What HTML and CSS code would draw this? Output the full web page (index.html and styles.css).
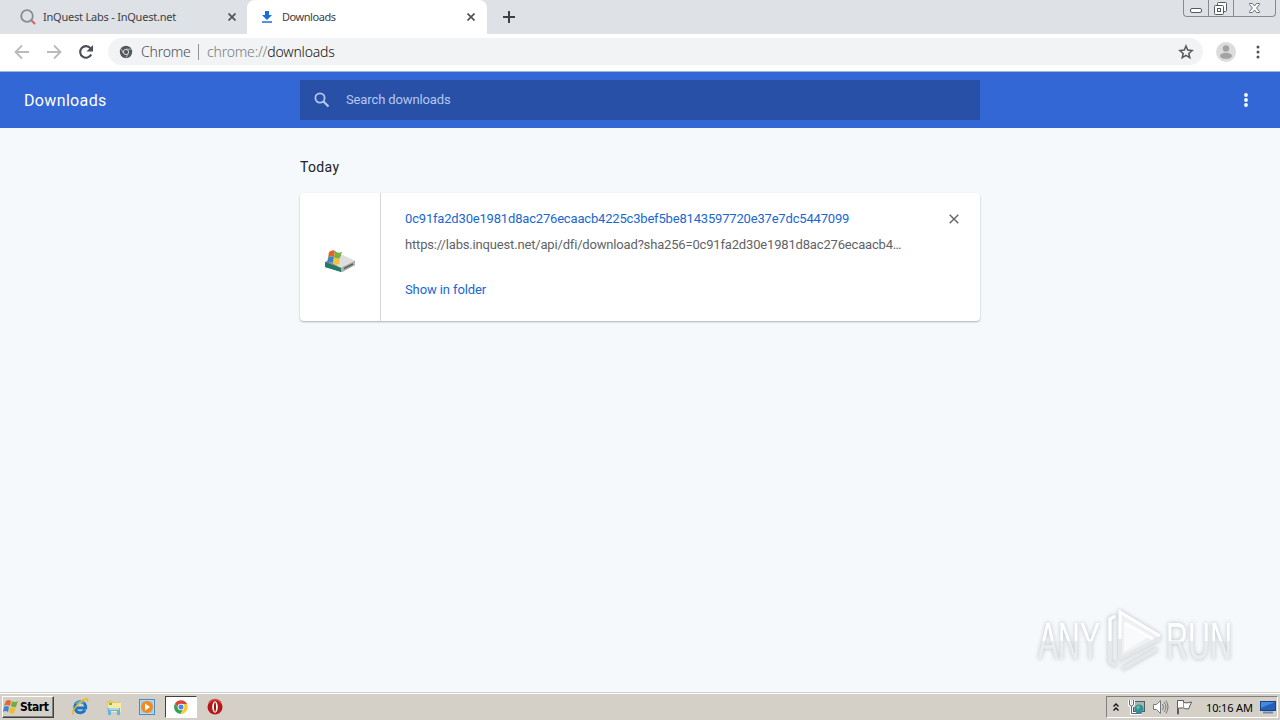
FILE: index.html
```html
<!DOCTYPE html>
<html lang="en">
<head>
    <meta charset="UTF-8">
    <meta name="viewport" content="width=device-width, initial-scale=1.0">
    <title>Downloads</title>
    <link rel="stylesheet" href="styles.css">
</head>
<body>
    <div class="tab-strip">
        <div class="tab">
            <svg class="tab-icon" width="16" height="16" viewBox="0 0 16 16" fill="none">
                <circle cx="7" cy="7" r="5.8" stroke="#888b90" stroke-width="1.8"/>
                <path d="M11 11l1.5 1.5" stroke="#888b90" stroke-width="2"/>
                <path d="M12.3 12.3l2.7 2.7" stroke="#e0605a" stroke-width="2.2"/>
            </svg>
            <span class="tab-title tab-title-long">InQuest Labs - InQuest.net</span>
            <svg class="tab-close" width="8" height="8" viewBox="0 0 8 8"><path d="M.5.5l7 7M7.5.5l-7 7" stroke="#505359" stroke-width="1.7"/></svg>
        </div>
        <div class="tab active">
            <svg class="tab-icon" width="16" height="16" viewBox="0 0 16 16" fill="#1a6fd6">
                <path d="M6 2h4v4h3L8 11 3 6h3zM3 12.3h10v1.5H3z"/>
            </svg>
            <span class="tab-title">Downloads</span>
            <svg class="tab-close" width="8" height="8" viewBox="0 0 8 8"><path d="M.5.5l7 7M7.5.5l-7 7" stroke="#505359" stroke-width="1.7"/></svg>
        </div>
        <svg class="new-tab" width="12" height="12" viewBox="0 0 12 12"><path d="M6 0v12M0 6h12" stroke="#3c4043" stroke-width="2"/></svg>
        <div class="window-buttons">
            <div class="win-btn minimize">
                <svg width="24" height="16" viewBox="0 0 24 16"><rect x="6.5" y="8.5" width="11" height="4" rx="1.5" fill="#fff" stroke="#55585f"/></svg>
            </div>
            <div class="win-btn restore">
                <svg width="24" height="16" viewBox="0 0 24 16" fill="#fff" stroke="#55585f">
                    <rect x="8.5" y="2.5" width="9" height="9" rx="1"/>
                    <rect x="5.5" y="5.5" width="9" height="9" rx="1"/>
                    <rect x="8.5" y="8.5" width="3" height="3"/>
                </svg>
            </div>
            <div class="win-btn close">
                <svg width="40" height="16" viewBox="0 0 40 16"><path d="M15.5 3.5h3l2 2.5 2-2.5h3v1l-3 3.5 3 3.500v1h-3l-2-2.5-2 2.5h-3v-1l3-3.5-3-3.500z" fill="#fff" stroke="#6b6e75"/></svg>
            </div>
        </div>
    </div>

    <div class="toolbar">
        <svg class="nav-icon" width="16" height="16" viewBox="0 0 16 16" fill="none" stroke="#b8babd" stroke-width="1.8"><path d="M15 8H2M8 1.5L1.5 8 8 14.5"/></svg>
        <svg class="nav-icon" width="16" height="16" viewBox="0 0 16 16" fill="none" stroke="#b8babd" stroke-width="1.8"><path d="M1 8h13M8 1.5L14.5 8 8 14.5"/></svg>
        <svg class="nav-icon" width="16" height="16" viewBox="0 0 16 16"><path d="M13.2 10.5A5.8 5.8 0 1 1 12.5 4.3" fill="none" stroke="#4b4e52" stroke-width="2.1"/><path d="M15 1v6.5H8.5z" fill="#4b4e52"/></svg>
        <div class="address-bar">
            <svg class="site-icon" width="14" height="14" viewBox="0 0 14 14">
                <circle cx="7" cy="7" r="6.2" fill="#54575b"/>
                <path d="M7 4.2h5.5M4.6 8.4L2 4M9.4 8.4L7 12.8" stroke="#c0c3c6" stroke-width=".9"/>
                <circle cx="7" cy="7" r="2.6" fill="#54575b" stroke="#d9dbde"/>
            </svg>
            <span class="site-name">Chrome</span>
            <span class="divider"></span>
            <span class="url">chrome://<b>downloads</b></span>
            <svg class="star" width="16" height="16" viewBox="0 0 16 16"><path d="M8 2l1.7 4.1 4.4.4-3.3 2.9 1 4.3L8 11.4l-3.8 2.3 1-4.3-3.3-2.9 4.4-.4z" fill="none" stroke="#55585c" stroke-width="1.5"/></svg>
        </div>
        <svg class="profile" width="20" height="20" viewBox="0 0 20 20"><circle cx="10" cy="10" r="10" fill="#dcdcdc"/><circle cx="10" cy="6.5" r="3.2" fill="#a3a3a3"/><ellipse cx="10" cy="13.8" rx="6" ry="3" fill="#a3a3a3"/></svg>
        <svg class="menu" width="4" height="14" viewBox="0 0 4 14" fill="#505357"><circle cx="2" cy="2" r="1.5"/><circle cx="2" cy="7" r="1.5"/><circle cx="2" cy="12" r="1.5"/></svg>
    </div>

    <div class="header">
        <h1>Downloads</h1>
        <div class="search">
            <svg width="16" height="16" viewBox="0 0 16 16" fill="none" stroke="#b5c8f0"><circle cx="6" cy="6" r="4.6" stroke-width="1.8"/><path d="M9.5 9.5l5 5" stroke-width="2.2"/></svg>
            <span>Search downloads</span>
        </div>
        <svg class="header-menu" width="4" height="14" viewBox="0 0 4 14" fill="#fff"><circle cx="2" cy="2" r="1.9"/><circle cx="2" cy="7" r="1.9"/><circle cx="2" cy="12" r="1.9"/></svg>
    </div>

    <div class="content">
        <h2>Today</h2>
        <div class="card">
            <div class="card-icon">
                <svg width="32" height="24" viewBox="0 0 32 24">
                    <path d="M1 13l15-7 15 6v4l-13 7L1 18z" fill="#8c8e8d"/>
                    <path d="M3 11l16-5 12 6-14 7z" fill="#dededc"/>
                    <path d="M17 19v4l14-7v-4z" fill="#b0b0ae"/>
                    <path d="M20 19.5l9-4.5" stroke="#5e615f" stroke-width="1.5"/>
                    <path d="M1 13l16 6v4L1 18z" fill="#237a65"/>
                    <path d="M5 3q4-3 6-1l-1 6q-3-2-6 1z" fill="#e7622b"/>
                    <path d="M11 2q3 3 7 1l-2 6q-3 2-6-1z" fill="#72b43d"/>
                    <path d="M4 9q3-3 6-1l-1 6q-3-2-6 0z" fill="#3685cb"/>
                    <path d="M10 8q3 3 6 1l-1 6q-3 2-6-1z" fill="#f4c13c"/>
                </svg>
            </div>
            <div class="details">
                <div class="file-name">0c91fa2d30e1981d8ac276ecaacb4225c3bef5be8143597720e37e7dc5447099</div>
                <div class="file-url">https://labs.inquest.net/api/dfi/download?sha256=0c91fa2d30e1981d8ac276ecaacb4…</div>
                <div class="show">Show in folder</div>
            </div>
            <svg class="remove" width="10" height="10" viewBox="0 0 10 10"><path d="M.7.7l8.6 8.6M9.3.7L.7 9.3" stroke="#606367" stroke-width="1.4"/></svg>
        </div>

        <svg class="watermark" width="220" height="80" viewBox="0 0 220 80" fill="none">
            <defs>
                <linearGradient id="fade" x1="0" y1="0" x2="0" y2="1">
                    <stop offset=".5" stop-color="#fff"/>
                    <stop offset=".5" stop-color="#eaeced"/>
                </linearGradient>
            </defs>
            <text x="4" y="56" textLength="62" lengthAdjust="spacingAndGlyphs" fill="url(#fade)">ANY</text>
            <path d="M86 9l41 23-41 25z" fill="#eef0f2"/>
            <path d="M90 20v29l26-16z" fill="#f8fafb"/>
            <path d="M81 13l-5 3v43l6 4M86 19v37l40-21M88 66l35-20" stroke="#e5e7e9" stroke-width="4"/>
            <path d="M81 13l-5 3v22M86 36V9l40 24M91 20l28 16" stroke="#fff" stroke-width="3"/>
            <text x="132" y="56" textLength="66" lengthAdjust="spacingAndGlyphs" fill="url(#fade)">RUN</text>
        </svg>
    </div>

    <div class="taskbar">
        <div class="start">
            <svg width="17" height="16" viewBox="0 0 17 16">
                <path d="M3 2q3-2 5 0L7 7Q4 5 1 7z" fill="#e7642f"/>
                <path d="M9 2q3 2 6 0l-2 6q-3 1-5-1z" fill="#73ad3c"/>
                <path d="M1 8q3-2 5 0l-1 5q-3-2-5 0z" fill="#3f85c9"/>
                <path d="M7 8q3 2 6 1l-2 5q-3 2-5-1z" fill="#f1bc35"/>
            </svg>
            <span>Start</span>
        </div>
        <div class="launchers">
            <div class="launcher">
                <svg width="18" height="18" viewBox="0 0 18 18" fill="none">
                    <path d="M14 12a5.5 5.5 0 1 1 .6-4v2H5" stroke="#1976c2" stroke-width="3"/>
                    <path d="M13 5a5 5 0 0 0-8 1" stroke="#54b5e9" stroke-width="1.5"/>
                    <path d="M3 16C-1 16 4 8 11 3c4-3 7-3 5 1" stroke="#e8b82d" stroke-width="1.6"/>
                </svg>
            </div>
            <div class="launcher">
                <svg width="18" height="18" viewBox="0 0 18 18">
                    <path d="M2 3l5-1 1 2h7v10H2z" fill="#e6c75f"/>
                    <path d="M3 5h13v9H3z" fill="#f8e9a3"/>
                    <path d="M4 5h3v2H4z" fill="#79b64a"/>
                    <path d="M3 10h12v7h-3v-4H6v4H3z" fill="#67b5d9"/>
                    <path d="M4 10h10v2H4z" fill="#a5d9ed"/>
                </svg>
            </div>
            <div class="launcher">
                <svg width="18" height="18" viewBox="0 0 18 18">
                    <rect x="1.5" y="1.5" width="15" height="15" fill="#b9d9ef" stroke="#4b8bbd"/>
                    <rect x="3" y="3" width="12" height="12" fill="#a3cbe6"/>
                    <circle cx="9" cy="9" r="6" fill="#ef8b22"/>
                    <path d="M7 5.5L12 9l-5 3.5z" fill="#fff"/>
                </svg>
            </div>
            <div class="launcher pressed">
                <svg width="14" height="14" viewBox="0 0 14 14">
                    <path d="M1 3.5A7 7 0 0 1 13.1 4H7L4.4 8.5z" fill="#dc4437"/>
                    <path d="M1 3.5A7 7 0 0 0 6.5 14l3.1-5.5H4.4z" fill="#38a055"/>
                    <path d="M13.1 4A7 7 0 0 1 6.5 14l3.1-5.5L7 4z" fill="#f8c932"/>
                    <circle cx="7" cy="7" r="3.3" fill="#fff"/>
                    <circle cx="7" cy="7" r="2.5" fill="#4386ed"/>
                </svg>
            </div>
            <div class="launcher">
                <svg width="18" height="18" viewBox="0 0 18 18"><circle cx="9" cy="9" r="7.5" fill="#b71618"/><path d="M3 5a7 7 0 0 1 12 0" stroke="#da5147" stroke-width="1.5" fill="none"/><ellipse cx="9" cy="9" rx="2.8" ry="5.7" fill="#fff"/><ellipse cx="9" cy="9" rx="1" ry="4.7" fill="#9c1014"/></svg>
            </div>
        </div>
        <div class="tray">
            <svg class="chevrons" width="6" height="9" viewBox="0 0 6 9" fill="none" stroke="#111" stroke-width="1.4"><path d="M.5 3.5L3 1l2.5 2.5M.5 7.5L3 5l2.5 2.5"/></svg>
            <svg class="network" width="17" height="16" viewBox="0 0 17 16">
                <rect x="5.5" y="2.5" width="11" height="10" fill="#a2b5b8" stroke="#525d60"/>
                <path d="M1.5 1v4q0 2 2 2t2-2V1M3.5 7v7.5h10" fill="none" stroke="#fff" stroke-width="3"/>
                <path d="M1.5 1v4q0 2 2 2t2-2V1M3.5 7v7.5h10" fill="none" stroke="#666"/>
                <circle cx="11" cy="10" r="4.5" fill="#328f9d"/>
                <path d="M8 8q3-3 4 0l-2 3z" fill="#75bc84"/>
            </svg>
            <svg class="volume" width="17" height="16" viewBox="0 0 17 16" fill="none" stroke="#77787a">
                <path d="M1.5 5.5h3l4-4v13l-4-4h-3z" fill="#fff"/>
                <path d="M10.5 5q2 3 0 6M12 3q4 5 0 10M14 1.5q4 6.5 0 13"/>
            </svg>
            <svg class="flag" width="17" height="16" viewBox="0 0 17 16"><path d="M1.5 15V1.5h6v2q3 1 8-.5l-3 7q-3 0-5-1h-5v6z" fill="#fff" stroke="#5c5d5e"/><path d="M7.5 3.5V9" stroke="#999"/></svg>
            <span class="clock">10:16 AM</span>
            <svg class="desktop" width="16" height="14" viewBox="0 0 16 14"><rect x=".5" y="1.5" width="15" height="9" fill="#245fb8" stroke="#15458c"/><path d="M1 2h14L1 8z" fill="#4688d9"/><path d="M3 12.5h10" stroke="#718aa9" stroke-width="2"/></svg>
        </div>
    </div>
</body>
</html>
```
FILE: styles.css
```css
* {
    box-sizing: border-box;
}

body {
    margin: 0;
    width: 1280px;
    height: 720px;
    display: flex;
    flex-direction: column;
    overflow: hidden;
    font-family: Roboto, sans-serif;
    background-color: #f5f9fc;
}

svg {
    display: block;
    flex: none;
}

.tab-strip {
    display: flex;
    height: 34px;
    background-color: #dee1e6;
    font-family: "Noto Sans", sans-serif;
    font-size: 11px;
    color: #3c4043;
}

.tab {
    display: flex;
    align-items: center;
    width: 247px;
    padding: 0 11px 0 20px;
}

.tab.active {
    width: 240px;
    padding: 0 12px;
    background-color: #fff;
    border-radius: 8px 8px 0 0;
}

.tab-title {
    flex: 1;
    margin-left: 7px;
    padding-bottom: 2px;
    letter-spacing: -0.45px;
    white-space: nowrap;
}

.tab .tab-title-long {
    letter-spacing: -0.22px;
}

.new-tab {
    margin: 11px 0 0 16px;
}

.window-buttons {
    display: flex;
    width: 93px;
    height: 17px;
    margin: 0 4px 0 auto;
    border: 1px solid #878a91;
    border-top: 0;
    border-radius: 0 0 4px 4px;
}

.win-btn {
    width: 25px;
    border-right: 1px solid #878a91;
}

.win-btn.close {
    width: 41px;
    border: 0;
}

.toolbar {
    display: flex;
    align-items: center;
    height: 38px;
    padding: 0 20px 2px 14px;
    background-color: #fff;
    border-bottom: 1px solid #9eb8d3;
}

.nav-icon {
    margin-right: 16px;
}

.address-bar {
    display: flex;
    align-items: center;
    width: 1095px;
    height: 27px;
    margin-left: -2px;
    padding: 0 9px 0 11px;
    background-color: #f1f3f4;
    border-radius: 14px;
    font-family: "Noto Sans", sans-serif;
    font-size: 14px;
    font-weight: 300;
    color: #4b4f54;
}

.site-name {
    width: 50px;
    margin-left: 8px;
    letter-spacing: -0.2px;
}

.divider {
    width: 1px;
    height: 16px;
    margin: 0 8px 0 7px;
    background-color: #909397;
}

.url {
    letter-spacing: -0.18px;
    color: #777b80;
}

.url b {
    font-weight: 300;
    color: #111;
}

.star {
    margin-left: auto;
}

.profile {
    margin-left: 13px;
}

.menu {
    margin-left: auto;
}

.header {
    display: flex;
    align-items: center;
    height: 56px;
    padding: 0 32px 0 24px;
    background-color: #3367d6;
    color: #fff;
}

.header h1 {
    width: 276px;
    margin: 0;
    font-size: 16px;
    font-weight: 400;
    letter-spacing: 0.35px;
}

.search {
    display: flex;
    align-items: center;
    width: 680px;
    height: 40px;
    padding-left: 14px;
    background-color: #2850a7;
    color: #b5c8f0;
    font-size: 13px;
}

.search span {
    margin-left: 16px;
    padding-bottom: 2px;
    letter-spacing: -0.12px;
}

.header-menu {
    margin-left: auto;
}

.content {
    position: relative;
    flex: 1;
    padding-top: 31px;
}

.content h2 {
    width: 680px;
    height: 34px;
    margin: 0 auto;
    font-size: 14px;
    font-weight: 400;
    line-height: 17px;
    letter-spacing: 0.35px;
    color: #202124;
}

.card {
    display: flex;
    width: 680px;
    height: 128px;
    margin: 0 auto;
    background-color: #fff;
    border-radius: 4px;
    box-shadow: 0 1px 2px rgba(60, 64, 67, 0.4);
    font-size: 13px;
}

.card-icon {
    display: flex;
    align-items: center;
    justify-content: center;
    width: 81px;
    padding: 8px 1px 0 0;
    border-right: 1px solid #d5d5d5;
}

.details {
    flex: 1;
    padding: 17px 0 0 24px;
    line-height: 18px;
    white-space: nowrap;
}

.file-name {
    letter-spacing: -0.18px;
    color: #1967d2;
}

.file-url {
    margin-top: 8px;
    letter-spacing: -0.17px;
    color: #5f6368;
}

.show {
    margin-top: 27px;
    letter-spacing: -0.1px;
    color: #1967d2;
}

.remove {
    margin: 21px 21px 0 0;
}

/* floats over the bottom right corner of the page */
.watermark {
    position: absolute;
    right: 26px;
    bottom: 9px;
    filter: drop-shadow(0 0 2px rgba(110, 115, 120, 0.45));
    font-family: "Liberation Sans", sans-serif;
    font-size: 52px;
}

.taskbar {
    display: flex;
    align-items: center;
    height: 28px;
    padding: 1px 2px 0;
    background-color: #d4d0c8;
    border-top: 1px solid #d4d0c8;
    box-shadow: inset 0 1px #fff;
    font-size: 11px;
    color: #000;
}

.start {
    display: flex;
    align-items: center;
    width: 52px;
    height: 22px;
    border: 1px solid;
    border-color: #fff #404040 #404040 #fff;
    box-shadow: inset -1px -1px #808080;
    font-family: "DejaVu Sans Condensed", "DejaVu Sans", sans-serif;
    font-size: 12px;
    font-weight: bold;
}

.start span {
    letter-spacing: -0.45px;
}

.launchers {
    display: flex;
    margin-left: 10px;
}

.launcher {
    display: flex;
    align-items: center;
    justify-content: center;
    width: 32px;
    height: 22px;
    margin-right: 1.7px;
}

.launcher.pressed {
    background-color: #fff;
    border: 1px solid;
    border-color: #404040 #fff #fff #404040;
}

.tray {
    display: flex;
    align-items: center;
    width: 172px;
    height: 22px;
    margin-left: auto;
    padding-left: 6px;
    border: 1px solid;
    border-color: #808080 #fff #fff #808080;
}

.network {
    margin-left: 9px;
}

.volume {
    margin-left: 7px;
}

.flag {
    margin-left: 7px;
}

.clock {
    width: 47px;
    margin-left: 13px;
    font-family: "Noto Sans", sans-serif;
    letter-spacing: -0.15px;
    white-space: nowrap;
}

.desktop {
    margin-left: 7px;
}
```
